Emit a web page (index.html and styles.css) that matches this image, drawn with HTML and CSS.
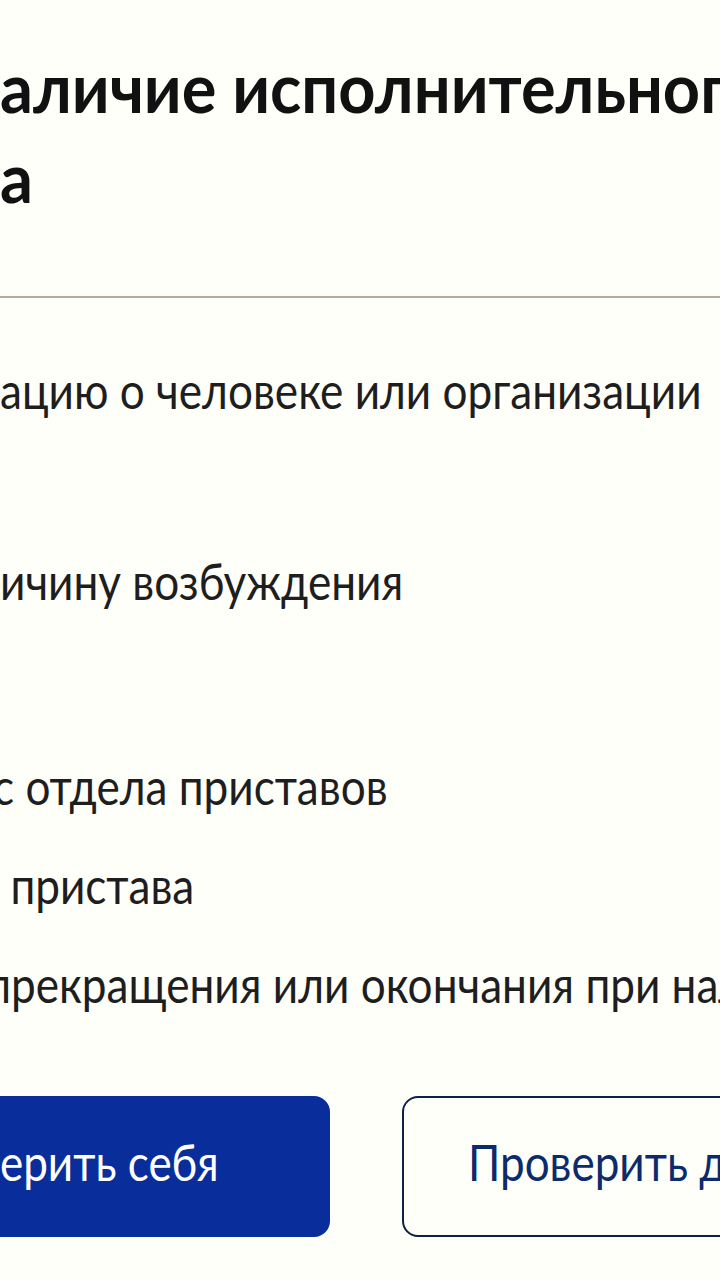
FILE: index.html
```html
<!DOCTYPE html>
<html lang="ru">
<head>
<meta charset="utf-8">
<title>Проверить наличие исполнительного производства</title>
<link rel="stylesheet" href="styles.css">
</head>
<body>
<main class="page">
  <h1 class="title"><span class="line">аличие исполнительного</span><span class="line">а</span></h1>
  <hr class="divider">
  <ul class="list">
    <li>ацию о человеке или организации</li>
    <li>&nbsp;</li>
    <li class="up">ичину возбуждения</li>
    <li>&nbsp;</li>
    <li class="cut-c">с отдела приставов</li>
    <li class="lead-space">пристава</li>
    <li class="cut-r">прекращения или окончания при наличии</li>
  </ul>
  <div class="actions">
    <button class="btn btn-primary"><span class="btn-text">ерить себя</span></button>
    <button class="btn btn-outline"><span class="btn-text">Проверить долг</span></button>
  </div>
</main>
</body>
</html>
```

FILE: styles.css
```css
html, body {
  margin: 0;
  padding: 0;
  background: #fffffa;
  overflow: hidden;
}
body {
  width: 720px;
  height: 1280px;
  font-family: Lato, "Noto Sans", sans-serif;
  color: #1c1c1c;
}
.page {
  display: flex;
  flex-direction: column;
  white-space: nowrap;
}
.title {
  margin: 42px 0 0 0;
  font-size: 68px;
  line-height: 90px;
  font-weight: 700;
  color: #111;
  display: flex;
  flex-direction: column;
}
.title .line {
  transform: scaleX(0.955);
  transform-origin: left center;
}
.divider {
  margin: 74px 0 0 0;
  border: 0;
  height: 2px;
  background: #b3ab9e;
}
.list {
  list-style: none;
  margin: 42px 0 0 0;
  padding: 0;
  font-size: 51px;
  line-height: 99px;
  color: #1e1e1e;
}
.list li {
  height: 99px;
  transform: scaleX(0.865);
  transform-origin: left center;
}
.list li.up { line-height: 86px; }
.cut-c { text-indent: -8px; }
.lead-space { padding-left: 12px; }
.cut-r { text-indent: -16px; }
.actions {
  margin-top: 63px;
  display: flex;
  gap: 72px;
}
.btn {
  font-family: Lato, "Noto Sans", sans-serif;
  font-size: 50px;
  height: 141px;
  border-radius: 16px;
  display: flex;
  align-items: center;
  flex-shrink: 0;
  white-space: nowrap;
  overflow: hidden;
  padding-bottom: 10px;
}
.btn-text {
  display: inline-block;
  transform: scaleX(0.88);
  transform-origin: left center;
}
.btn-primary {
  width: 330px;
  background: #0a2d9c;
  color: #fff;
  border: 0;
  padding-left: 0;
  padding-right: 0;
  border-top-left-radius: 0;
  border-bottom-left-radius: 0;
}
.btn-outline {
  width: 400px;
  background: #fffffa;
  color: #0c2b6b;
  border: 2px solid #0d2144;
  padding-left: 64px;
  padding-right: 0;
}
```
